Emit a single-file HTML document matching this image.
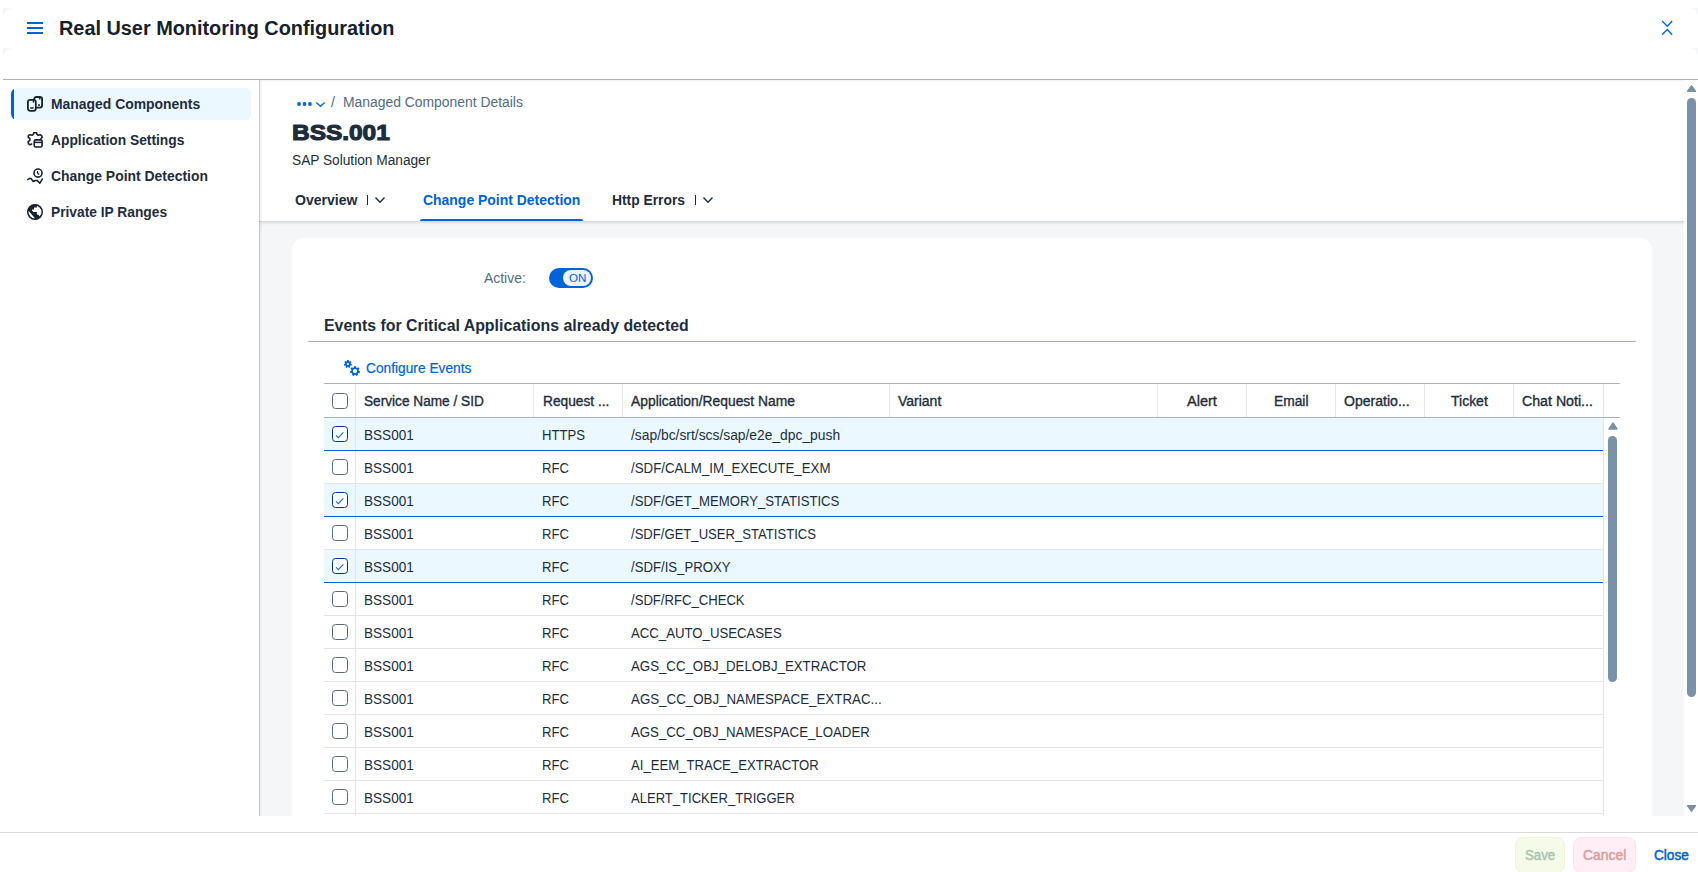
<!DOCTYPE html>
<html lang="en">
<head>
<meta charset="utf-8">
<title>Real User Monitoring Configuration</title>
<style>
*{box-sizing:border-box;margin:0;padding:0}
html,body{width:1698px;height:872px;overflow:hidden;background:#fff}
body{font-family:"Liberation Sans",sans-serif;font-size:14px;color:#1d2d3e;position:relative}
.abs{position:absolute}
.t{position:absolute;white-space:nowrap;line-height:1;transform-origin:0 0}
svg{display:block}
/* header */
#hdrline{left:3px;top:79px;width:1695px;height:1px;background:#a8b3c0}
.crn{position:absolute;width:10px;height:10px}
/* left nav */
#nav{left:0;top:80px;width:259px;height:736px;background:#fff}
#navsel{left:11px;top:88px;width:240px;height:32px;background:#ebf8ff;border-radius:6px;overflow:hidden}
#navsel:before{content:"";position:absolute;left:0;top:0;width:3px;height:32px;background:#0064d9}
.navt{font-weight:bold;font-size:14px;left:51px}
/* content */
#content{left:259px;top:80px;width:1425px;height:736px;background:#f5f6f7;overflow:hidden}
#navshadow{left:259px;top:80px;width:3px;height:736px;background:linear-gradient(90deg,rgba(0,0,0,.18) 0,rgba(0,0,0,.18) 33.3%,rgba(0,0,0,.07) 33.3%,rgba(0,0,0,.07) 66.6%,rgba(0,0,0,.02) 66.6%,rgba(0,0,0,.02) 100%)}
#topshadow{left:259px;top:80px;width:1439px;height:2px;background:linear-gradient(180deg,rgba(0,0,0,.035) 0,rgba(0,0,0,.035) 50%,rgba(0,0,0,.012) 50%,rgba(0,0,0,.012) 100%)}
#ophdr{left:0;top:0;width:1425px;height:141px;background:#fff;box-shadow:0 0 0 1px #d9d9d9,0 2px 3px rgba(85,107,130,.18)}
#card{left:33px;top:158px;width:1360px;height:700px;background:#fff;border-radius:12px}
.bc{font-size:14px;color:#556b82}
#h1{font-size:22.2px;font-weight:bold;-webkit-text-stroke:1.1px #1d2d3e}
.tab{font-size:14px;font-weight:bold}
.blue{color:#0064d9}
#tabline{left:420px;top:218.6px;width:163px;height:2.4px;background:#0064d9;border-radius:2px 2px 0 0}
.vsep{position:absolute;width:1px;height:10px;background:#1d2d3e}
/* switch */
#sw{left:549px;top:268px;width:44px;height:20px;border-radius:10px;background:#0064d9}
#swh{left:563px;top:270px;width:28px;height:16px;border-radius:8px;background:#ebf3ff}
/* section */
#sect{font-size:15.8px;font-weight:bold}
#sectline{left:308px;top:341px;width:1328px;height:1px;background:#a8b3c0}
/* table */
#tbl{left:324px;top:383px;width:1296px;height:433px;overflow:hidden}
.hl{position:absolute;left:0;height:1px;background:#e5e5e5;width:1279px}
.hlb{position:absolute;left:0;height:1px;background:#0064d9;width:1279px}
.selrow{position:absolute;left:0;width:1279px;height:32px;background:#ebf8ff}
.vl{position:absolute;width:1px;background:#e5e5e5}
.cb{position:absolute;left:8px;width:16px;height:16px;border:1px solid #556b81;border-radius:3.6px;background:#fff}
.cb.on{border-color:#0032a5}
.th{position:absolute;white-space:nowrap;line-height:1;font-size:14px;color:#1d2d3e;transform-origin:0 0;-webkit-text-stroke:0.35px #1d2d3e}
.thc{text-align:center}
.td{position:absolute;white-space:nowrap;line-height:1;font-size:14px;color:#1d2d3e;transform-origin:0 0}
/* scrollbar */
#sbtrack{left:1684px;top:80px;width:14px;height:736px;background:#fff}
#sbthumb{left:1687px;top:98px;width:9px;height:599px;background:#7b91a9;border-radius:5px}
/* footer */
#footer{left:0;top:816px;width:1698px;height:56px;background:#fff}
#footline{left:0;top:832px;width:1698px;height:1px;background:#d9d9d9}
.btn{position:absolute;top:837px;height:36px;border-radius:8px;border:1px solid}
#bsave{left:1515px;width:50px;background:#f6fae8;border-color:#edf5d3}
#bcancel{left:1573px;width:63px;background:#ffeef5;border-color:#ffe1ee}
</style>
</head>
<body>
<!-- HEADER -->
<div class="crn" style="left:3px;top:8px;background:radial-gradient(circle at 100% 100%,#fff 9.5px,#f5f6f7 10.5px)"></div>
<div class="crn" style="left:3px;top:48px;background:radial-gradient(circle at 100% 100%,#fff 9.5px,#f5f6f7 10.5px)"></div>
<div class="crn" style="left:1688px;top:8px;background:radial-gradient(circle at 0 100%,#fff 9.5px,#f5f6f7 10.5px)"></div>
<div class="crn" style="left:1688px;top:48px;background:radial-gradient(circle at 0 100%,#fff 9.5px,#f5f6f7 10.5px)"></div>
<div class="abs" id="hdrline"></div>
<svg class="abs" style="left:27px;top:20px" width="16" height="16" viewBox="0 0 16 16"><path d="M0.5 3h15M0.5 8h15M0.5 13h15" stroke="#0064d9" stroke-width="2" stroke-linecap="round" fill="none"/></svg>
<div class="t" id="title" style="transform:scaleX(1.0138);left:59.0px;top:19.31px;font-size:19.6px;font-weight:bold;color:#15212d">Real User Monitoring Configuration</div>
<svg class="abs" style="left:1659px;top:20px" width="16" height="16" viewBox="0 0 16 16"><path d="M3.1 1 L8.25 6.2 L13.2 1 M3.1 14.75 L8.25 9.55 L13.2 14.75" stroke="#0064d9" stroke-width="1.3" fill="none"/></svg>

<!-- LEFT NAV -->
<div class="abs" id="nav"></div>
<div class="abs" id="navsel"></div>
<div class="t navt" id="n1" style="transform:scaleX(0.9938);top:97.1px">Managed Components</div>
<div class="t navt" id="n2" style="transform:scaleX(0.9856);top:133.1px">Application Settings</div>
<div class="t navt" id="n3" style="transform:scaleX(0.9936);top:169.1px">Change Point Detection</div>
<div class="t navt" id="n4" style="transform:scaleX(0.9836);top:205.1px">Private IP Ranges</div>
<!--NAVICONS-->
<svg class="abs" style="left:27px;top:96px" width="16" height="16" viewBox="0 0 16 16"><rect x="7.1" y="1.0" width="8" height="10.6" rx="2.3" fill="none" stroke="#16222e" stroke-width="1.8"/><path d="M11 8.9h2M12.7 1.5v1.9" stroke="#16222e" stroke-width="1.5" fill="none"/><rect x="0.9" y="3.8" width="7.9" height="11.1" rx="2.3" fill="#ebf8ff" stroke="#16222e" stroke-width="1.8"/><path d="M3.2 12.1h3.4M6.4 4.6v1.9" stroke="#16222e" stroke-width="1.5" fill="none"/></svg>
<svg class="abs" style="left:27px;top:132px" width="16" height="16" viewBox="0 0 16 16"><path d="M4.7 12.0 L2.9 12.8 L1.4 11.7 L1.1 9.8 L2.9 8.1 L2.9 6.7 L1.1 5.1 L1.5 3.4 L2.9 2.7 L5.3 3.3 L6.4 2.2 L6.8 0.7 L9.4 0.7 L9.9 2.2 L11.0 3.3 L13.2 2.7 L14.6 3.6 L15.2 5.2 L14.1 6.6" fill="none" stroke="#16222e" stroke-width="1.6" stroke-linejoin="round" stroke-linecap="round"/><rect x="7.2" y="7.9" width="7.9" height="7.1" rx="1.6" fill="none" stroke="#16222e" stroke-width="1.6"/><path d="M7.3 10.4h7.7" stroke="#16222e" stroke-width="1.5"/></svg>
<svg class="abs" style="left:27px;top:168px" width="16" height="16" viewBox="0 0 16 16"><circle cx="11" cy="5.1" r="4.05" fill="none" stroke="#16222e" stroke-width="1.6"/><path d="M10.6 2.9V5.2L12.2 6.6" fill="none" stroke="#16222e" stroke-width="1.3"/><path d="M0.3 11.9L2.5 10.4L4 10.5L6.2 13.5L8.5 12.5L10 12.4L12.8 15.2L15.7 10.6" fill="none" stroke="#16222e" stroke-width="1.55" stroke-linejoin="round"/></svg>
<svg class="abs" style="left:27px;top:204px" width="16" height="16" viewBox="0 0 16 16"><defs><clipPath id="gl"><circle cx="8" cy="8" r="7.5"/></clipPath></defs><path clip-path="url(#gl)" d="M-1 6.6V-1H9.9V3.6H7V5.5H5.3L4.9 6.6L6.5 8.1H9.9V10.6L11.8 11.1L12.6 12.6L15 14L8 17L7.5 13.8L1.7 6.9Z" fill="#16222e"/><circle cx="8" cy="8" r="7.25" fill="none" stroke="#16222e" stroke-width="1.5"/></svg>
<!--/NAVICONS-->

<!-- CONTENT -->
<div class="abs" id="content">
  <div class="abs" id="card"></div>
  <div class="abs" id="ophdr"></div>
</div>
<div class="abs" id="navshadow"></div>
<div class="abs" id="topshadow"></div>

<!-- breadcrumb -->
<svg class="abs" style="left:296px;top:100px" width="32" height="8" viewBox="0 0 32 8"><ellipse cx="3" cy="4" rx="1.85" ry="2.05" fill="#0064d9"/><ellipse cx="8.5" cy="4" rx="1.85" ry="2.05" fill="#0064d9"/><ellipse cx="14" cy="4" rx="1.85" ry="2.05" fill="#0064d9"/><path d="M20.3 2.5 L24.5 6.3 L28.7 2.5" stroke="#0064d9" stroke-width="1.3" fill="none"/></svg>
<div class="t bc" id="bcs" style="left:331px;top:95.2px">/</div>
<div class="t bc" id="bct" style="transform:scaleX(0.992);left:343.4px;top:95.2px">Managed Component Details</div>
<div class="t" id="h1" style="transform:scaleX(1.1012);left:291.8px;top:121.5px">BSS.001</div>
<div class="t" id="sub" style="transform:scaleX(0.9781);left:292.3px;top:153px;font-size:14px">SAP Solution Manager</div>

<!-- tabs -->
<div class="t tab" id="tab1" style="transform:scaleX(1.0038);left:294.9px;top:193.2px">Overview</div>
<div class="vsep" style="left:367px;top:195px"></div>
<svg class="abs" style="left:374px;top:196px" width="12" height="8" viewBox="0 0 12 8"><path d="M1.5 1.5 L6 6.2 L10.5 1.5" stroke="#1d2d3e" stroke-width="1.4" fill="none"/></svg>
<div class="t tab blue" id="tab2" style="transform:scaleX(0.9962);left:422.9px;top:193.2px">Change Point Detection</div>
<div class="abs" id="tabline"></div>
<div class="t tab" id="tab3" style="transform:scaleX(0.9877);left:611.8px;top:193.2px">Http Errors</div>
<div class="vsep" style="left:695px;top:195px"></div>
<svg class="abs" style="left:702px;top:196px" width="12" height="8" viewBox="0 0 12 8"><path d="M1.5 1.5 L6 6.2 L10.5 1.5" stroke="#1d2d3e" stroke-width="1.4" fill="none"/></svg>

<!-- form -->
<div class="t" id="active" style="transform:scaleX(0.9949);left:483.5px;top:271.1px;font-size:14px;color:#556b82">Active:</div>
<div class="abs" id="sw"></div>
<div class="abs" id="swh"></div>
<div class="t blue" id="on" style="transform:scaleX(1.16);left:568.5px;top:273.6px;font-size:10px">ON</div>

<!-- section -->
<div class="t" id="sect" style="transform:scaleX(1.0051);left:323.8px;top:318.4px">Events for Critical Applications already detected</div>
<div class="abs" id="sectline"></div>
<!--CFGICON-->
<svg class="abs" style="left:344px;top:360px" width="17" height="17" viewBox="0 0 17 17"><path d="M2.94 1.32 L3.06 0.09 L4.74 0.09 L4.86 1.32 L5.40 1.57 L6.43 0.91 L7.48 2.22 L6.60 3.08 L6.73 3.66 L7.90 4.05 L7.53 5.69 L6.30 5.54 L5.93 6.00 L6.35 7.16 L4.84 7.89 L4.20 6.83 L3.60 6.83 L2.96 7.89 L1.45 7.16 L1.87 6.00 L1.50 5.54 L0.27 5.69 L-0.10 4.05 L1.07 3.66 L1.20 3.08 L0.32 2.22 L1.37 0.91 L2.40 1.57 Z M2.80 4.00 a1.10 1.10 0 1 0 2.20 0 a1.10 1.10 0 1 0 -2.20 0 Z M9.75 7.62 L9.94 6.16 L12.06 6.16 L12.25 7.62 L12.94 7.95 L14.20 7.19 L15.52 8.85 L14.50 9.91 L14.67 10.65 L16.05 11.17 L15.58 13.23 L14.12 13.09 L13.64 13.69 L14.10 15.09 L12.19 16.01 L11.38 14.78 L10.62 14.78 L9.81 16.01 L7.90 15.09 L8.36 13.69 L7.88 13.09 L6.42 13.23 L5.95 11.17 L7.33 10.65 L7.50 9.91 L6.48 8.85 L7.80 7.19 L9.06 7.95 Z M8.85 11.10 a2.15 2.15 0 1 0 4.30 0 a2.15 2.15 0 1 0 -4.30 0 Z" fill="#0064d9" fill-rule="evenodd"/></svg>
<!--/CFGICON-->
<div class="t blue" id="cfg" style="transform:scaleX(0.9813);left:365.8px;top:361.1px;font-size:14px;-webkit-text-stroke-width:0.2px">Configure Events</div>

<div class="abs" id="tbl">
<div class="selrow" style="top:35px"></div>
<div class="selrow" style="top:101px"></div>
<div class="selrow" style="top:167px"></div>
<div class="vl" style="left:31px;top:35px;height:420px"></div>
<div class="vl" style="left:1279px;top:35px;height:420px"></div>
<div class="hl" style="top:0;background:#a8b3c0;width:1296px"></div>
<div class="hl" style="top:34px;background:#a8b3c0;width:1296px"></div>
<div class="hlb" style="top:67px"></div>
<div class="hl" style="top:100px"></div>
<div class="hlb" style="top:133px"></div>
<div class="hl" style="top:166px"></div>
<div class="hlb" style="top:199px"></div>
<div class="hl" style="top:232px"></div>
<div class="hl" style="top:265px"></div>
<div class="hl" style="top:298px"></div>
<div class="hl" style="top:331px"></div>
<div class="hl" style="top:364px"></div>
<div class="hl" style="top:397px"></div>
<div class="hl" style="top:430px"></div>
<div class="vl" style="left:31px;top:1px;height:33px"></div>
<div class="vl" style="left:209px;top:1px;height:33px"></div>
<div class="vl" style="left:298px;top:1px;height:33px"></div>
<div class="vl" style="left:565px;top:1px;height:33px"></div>
<div class="vl" style="left:833px;top:1px;height:33px"></div>
<div class="vl" style="left:922px;top:1px;height:33px"></div>
<div class="vl" style="left:1011px;top:1px;height:33px"></div>
<div class="vl" style="left:1100px;top:1px;height:33px"></div>
<div class="vl" style="left:1189px;top:1px;height:33px"></div>
<div class="vl" style="left:1279px;top:1px;height:33px"></div>
<div class="cb" style="top:10px"></div>
<div class="th" id="hS" style="transform:scaleX(0.9745);left:39.9px;top:11px">Service Name / SID</div>
<div class="th" id="hR" style="transform:scaleX(0.9808);left:218.5px;top:11px">Request ...</div>
<div class="th" id="hA" style="transform:scaleX(0.9887);left:307.0px;top:11px">Application/Request Name</div>
<div class="th" id="hV" style="transform:scaleX(0.9994);left:574.1px;top:11px">Variant</div>
<div class="th" id="hAl" style="transform:scaleX(1.0383);left:862.8px;top:11px">Alert</div>
<div class="th" id="hEm" style="transform:scaleX(0.9853);left:949.7px;top:11px">Email</div>
<div class="th" id="hOp" style="transform:scaleX(1.0034);left:1019.6px;top:11px">Operatio...</div>
<div class="th" id="hTi" style="transform:scaleX(0.9992);left:1126.7px;top:11px">Ticket</div>
<div class="th" id="hCh" style="transform:scaleX(1.0124);left:1197.6px;top:11px">Chat Noti...</div>
<div class="cb on" style="top:43px"><svg width="14" height="14" viewBox="0 0 14 14"><path d="M3.0 8.4 L5.3 10.7 L10.4 5.3" fill="none" stroke="#0f6ddd" stroke-width="1.05"/></svg></div>
<div class="td" id="r0a" style="transform:scaleX(0.9693);left:39.9px;top:45px">BSS001</div>
<div class="td" id="r0b" style="transform:scaleX(0.937);left:218.0px;top:45px">HTTPS</div>
<div class="td" id="r0c" style="transform:scaleX(0.9878);left:307.0px;top:45px">/sap/bc/srt/scs/sap/e2e_dpc_push</div>
<div class="cb" style="top:76px"></div>
<div class="td" id="r1a" style="transform:scaleX(0.9693);left:39.9px;top:78px">BSS001</div>
<div class="td" id="r1b" style="transform:scaleX(0.9346);left:218.0px;top:78px">RFC</div>
<div class="td" id="r1c" style="transform:scaleX(0.9497);left:307.0px;top:78px">/SDF/CALM_IM_EXECUTE_EXM</div>
<div class="cb on" style="top:109px"><svg width="14" height="14" viewBox="0 0 14 14"><path d="M3.0 8.4 L5.3 10.7 L10.4 5.3" fill="none" stroke="#0f6ddd" stroke-width="1.05"/></svg></div>
<div class="td" id="r2a" style="transform:scaleX(0.9693);left:39.9px;top:111px">BSS001</div>
<div class="td" id="r2b" style="transform:scaleX(0.9346);left:218.0px;top:111px">RFC</div>
<div class="td" id="r2c" style="transform:scaleX(0.94);left:307.0px;top:111px">/SDF/GET_MEMORY_STATISTICS</div>
<div class="cb" style="top:142px"></div>
<div class="td" id="r3a" style="transform:scaleX(0.9693);left:39.9px;top:144px">BSS001</div>
<div class="td" id="r3b" style="transform:scaleX(0.9346);left:218.0px;top:144px">RFC</div>
<div class="td" id="r3c" style="transform:scaleX(0.935);left:307.0px;top:144px">/SDF/GET_USER_STATISTICS</div>
<div class="cb on" style="top:175px"><svg width="14" height="14" viewBox="0 0 14 14"><path d="M3.0 8.4 L5.3 10.7 L10.4 5.3" fill="none" stroke="#0f6ddd" stroke-width="1.05"/></svg></div>
<div class="td" id="r4a" style="transform:scaleX(0.9693);left:39.9px;top:177px">BSS001</div>
<div class="td" id="r4b" style="transform:scaleX(0.9346);left:218.0px;top:177px">RFC</div>
<div class="td" id="r4c" style="transform:scaleX(0.9403);left:307.0px;top:177px">/SDF/IS_PROXY</div>
<div class="cb" style="top:208px"></div>
<div class="td" id="r5a" style="transform:scaleX(0.9693);left:39.9px;top:210px">BSS001</div>
<div class="td" id="r5b" style="transform:scaleX(0.9346);left:218.0px;top:210px">RFC</div>
<div class="td" id="r5c" style="transform:scaleX(0.9361);left:307.0px;top:210px">/SDF/RFC_CHECK</div>
<div class="cb" style="top:241px"></div>
<div class="td" id="r6a" style="transform:scaleX(0.9693);left:39.9px;top:243px">BSS001</div>
<div class="td" id="r6b" style="transform:scaleX(0.9346);left:218.0px;top:243px">RFC</div>
<div class="td" id="r6c" style="transform:scaleX(0.9418);left:307.0px;top:243px">ACC_AUTO_USECASES</div>
<div class="cb" style="top:274px"></div>
<div class="td" id="r7a" style="transform:scaleX(0.9693);left:39.9px;top:276px">BSS001</div>
<div class="td" id="r7b" style="transform:scaleX(0.9346);left:218.0px;top:276px">RFC</div>
<div class="td" id="r7c" style="transform:scaleX(0.9465);left:307.0px;top:276px">AGS_CC_OBJ_DELOBJ_EXTRACTOR</div>
<div class="cb" style="top:307px"></div>
<div class="td" id="r8a" style="transform:scaleX(0.9693);left:39.9px;top:309px">BSS001</div>
<div class="td" id="r8b" style="transform:scaleX(0.9346);left:218.0px;top:309px">RFC</div>
<div class="td" id="r8c" style="transform:scaleX(0.9511);left:307.0px;top:309px">AGS_CC_OBJ_NAMESPACE_EXTRAC...</div>
<div class="cb" style="top:340px"></div>
<div class="td" id="r9a" style="transform:scaleX(0.9693);left:39.9px;top:342px">BSS001</div>
<div class="td" id="r9b" style="transform:scaleX(0.9346);left:218.0px;top:342px">RFC</div>
<div class="td" id="r9c" style="transform:scaleX(0.9453);left:307.0px;top:342px">AGS_CC_OBJ_NAMESPACE_LOADER</div>
<div class="cb" style="top:373px"></div>
<div class="td" id="r10a" style="transform:scaleX(0.9693);left:39.9px;top:375px">BSS001</div>
<div class="td" id="r10b" style="transform:scaleX(0.9346);left:218.0px;top:375px">RFC</div>
<div class="td" id="r10c" style="transform:scaleX(0.9368);left:307.0px;top:375px">AI_EEM_TRACE_EXTRACTOR</div>
<div class="cb" style="top:406px"></div>
<div class="td" id="r11a" style="transform:scaleX(0.9693);left:39.9px;top:408px">BSS001</div>
<div class="td" id="r11b" style="transform:scaleX(0.9346);left:218.0px;top:408px">RFC</div>
<div class="td" id="r11c" style="transform:scaleX(0.9324);left:307.0px;top:408px">ALERT_TICKER_TRIGGER</div>
<svg class="abs" style="left:1283.6px;top:39.3px" width="10" height="8" viewBox="0 0 10 8"><path d="M5 1 L9 7 L1 7 Z" fill="#7b91a9" stroke="#7b91a9" stroke-width="1.4" stroke-linejoin="round"/></svg>
<div class="abs" style="left:1284px;top:53px;width:9px;height:246px;background:#7b91a9;border-radius:4.5px"></div>
</div>

<!-- SCROLLBAR -->
<div class="abs" id="sbtrack"></div>
<svg class="abs" style="left:1686px;top:84px" width="11" height="9" viewBox="0 0 11 9"><path d="M5.5 2 L9.3 7.3 L1.7 7.3 Z" fill="#7b91a9" stroke="#7b91a9" stroke-width="1.6" stroke-linejoin="round"/></svg>
<div class="abs" id="sbthumb"></div>
<svg class="abs" style="left:1686px;top:804px" width="11" height="9" viewBox="0 0 11 9"><path d="M5.5 7 L9.3 1.7 L1.7 1.7 Z" fill="#7b91a9" stroke="#7b91a9" stroke-width="1.6" stroke-linejoin="round"/></svg>

<!-- FOOTER -->
<div class="abs" id="footer"></div>
<div class="abs" id="footline"></div>
<div class="btn" id="bsave"></div>
<div class="btn" id="bcancel"></div>
<div class="t" id="tsave" style="transform:scaleX(0.9461);left:1524.9px;top:848.1px;font-size:14px;-webkit-text-stroke-width:0.5px;color:#a9c6b0">Save</div>
<div class="t" id="tcancel" style="transform:scaleX(0.9933);left:1583.2px;top:848.1px;font-size:14px;-webkit-text-stroke-width:0.5px;color:#dd9c9c">Cancel</div>
<div class="t blue" id="tclose" style="transform:scaleX(0.9722);left:1654.0px;top:848.1px;font-size:14px;-webkit-text-stroke-width:0.5px">Close</div>
</body>
</html>
